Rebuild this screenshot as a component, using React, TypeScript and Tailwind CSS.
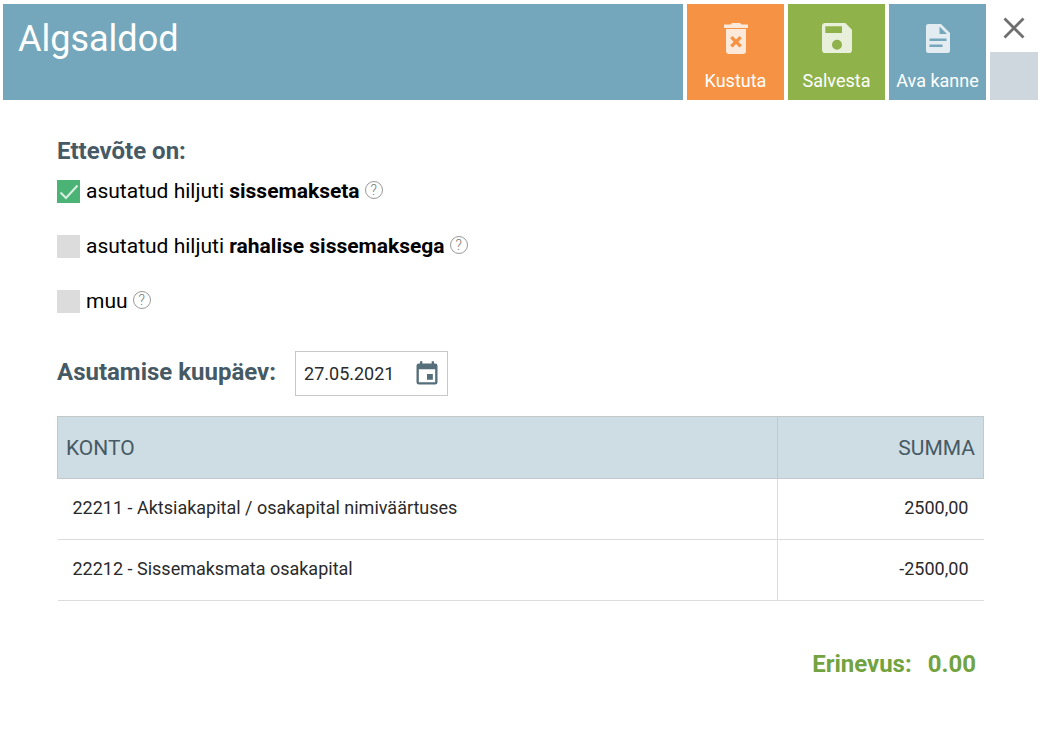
import type { ReactNode } from "react";

const accounts = [
  { name: "22211 - Aktsiakapital / osakapital nimiväärtuses", sum: "2500,00" },
  { name: "22212 - Sissemaksmata osakapital", sum: "-2500,00" },
];

function TrashIcon() {
  return (
    <svg viewBox="0 0 24 31" className="h-[31px] w-6" fill="currentColor" aria-hidden="true">
      <path
        fillRule="evenodd"
        d="M0 1.500h6.500L8 0h8l1.500 1.500H24V5H0zM2 6h20v22a3 3 0 0 1-3 3H5a3 3 0 0 1-3-3zM8.500 13L6.200 15.300l3.500 3.500-3.500 3.500L8.500 24.600l3.500-3.500 3.500 3.500 2.300-2.300-3.500-3.500 3.500-3.500L15.500 13 12 16.500z"
      />
    </svg>
  );
}

function SaveIcon() {
  return (
    <svg viewBox="3 3 18 18" className="size-[30px]" fill="currentColor" aria-hidden="true">
      <path
        fillRule="evenodd"
        d="M17 3H5a2 2 0 0 0-2 2v14a2 2 0 0 0 2 2h14a2 2 0 0 0 2-2V7zM12 19a3 3 0 1 1 0-6 3 3 0 0 1 0 6zM15 9H5V5h10z"
      />
    </svg>
  );
}

function DocumentIcon() {
  return (
    <svg viewBox="0 0 24 29" className="h-[29px] w-6" fill="currentColor" aria-hidden="true">
      <path
        fillRule="evenodd"
        d="M2.500 0H15l9 9v17.500a2.500 2.500 0 0 1-2.500 2.500h-19A2.500 2.500 0 0 1 0 26.500v-24A2.500 2.500 0 0 1 2.500 0zM13.500 2.500v7.500H21zM3.500 14.500V17h17v-2.500zM3.500 20.500V23h13v-2.500z"
      />
    </svg>
  );
}

function CalendarIcon() {
  return (
    <svg viewBox="0 0 24 24" className="size-7" fill="currentColor" aria-hidden="true">
      <path d="M17 12h-5v5h5v-5zM16 1v2H8V1H6v2H5a2 2 0 0 0-2 2v14a2 2 0 0 0 2 2h14a2 2 0 0 0 2-2V5a2 2 0 0 0-2-2h-1V1h-2zm3 18H5V8h14v11z" />
    </svg>
  );
}

function ActionButton({ label, color, icon }: { label: string; color: string; icon: ReactNode }) {
  return (
    <button
      type="button"
      className={`flex w-[97px] shrink-0 flex-col items-center justify-between pt-[18px] pb-[6px] text-lg leading-[26px] whitespace-nowrap text-white ${color}`}
    >
      <span className="flex h-8 items-center opacity-80">{icon}</span>
      {label}
    </button>
  );
}

function Option({ id, text, strong, checked }: { id: string; text: string; strong?: string; checked?: boolean }) {
  return (
    <div className="flex h-6 items-center">
      <span className="grid size-[23px] shrink-0">
        <input
          id={id}
          type="checkbox"
          defaultChecked={checked}
          className="peer col-start-1 row-start-1 size-[23px] appearance-none bg-[#dcdcdc] checked:bg-[#4cb377]"
        />
        <svg
          viewBox="0 0 23 23"
          className="pointer-events-none col-start-1 row-start-1 hidden size-[23px] peer-checked:block"
          fill="none"
          stroke="#d9efe2"
          strokeWidth="2"
          aria-hidden="true"
        >
          <path d="M3.500 12.500L9 18L20.500 5.500" />
        </svg>
      </span>
      <label htmlFor={id} className="pl-[6px] text-[21px] leading-6 text-black">
        {text}
        {strong && <b className="font-bold"> {strong}</b>}
      </label>
      <button
        type="button"
        aria-label="Abi"
        className="mb-[2px] ml-[5px] flex size-[18px] items-center justify-center rounded-full border border-[#999] text-sm leading-4 font-light text-[#777]"
      >
        ?
      </button>
    </div>
  );
}

export default function App() {
  return (
    <div className="min-h-screen bg-white font-[Roboto,sans-serif]">
      <header className="flex h-[100px] gap-1 pt-1 pr-1 pl-[3px]">
        <h1 className="flex-1 bg-[#74a7bc] px-[15px] pt-[15px] text-4xl leading-10 text-white">Algsaldod</h1>
        <ActionButton label="Kustuta" color="bg-[#f59244]" icon={<TrashIcon />} />
        <ActionButton label="Salvesta" color="bg-[#8fb34a]" icon={<SaveIcon />} />
        <ActionButton label="Ava kanne" color="bg-[#74a7bc]" icon={<DocumentIcon />} />
        <div className="flex w-12 shrink-0 flex-col">
          <button type="button" aria-label="Sulge" className="flex h-12 items-center justify-center">
            <svg viewBox="0 0 22 22" className="size-[22px]" stroke="#6f6f6f" strokeWidth="2.800" aria-hidden="true">
              <path d="M1.500 1.500l19 19M20.500 1.500l-19 19" />
            </svg>
          </button>
          <div className="flex-1 bg-[#ced6de]" />
        </div>
      </header>

      <main className="pt-9 pr-[58px] pl-[57px]">
        <h2 className="text-2xl leading-[30px] font-bold text-[#465a65]">Ettevõte on:</h2>
        <div className="mt-[13px] flex flex-col gap-[31px]">
          <Option id="no-deposit" text="asutatud hiljuti" strong="sissemakseta" checked />
          <Option id="cash-deposit" text="asutatud hiljuti" strong="rahalise sissemaksega" />
          <Option id="other" text="muu" />
        </div>

        <div className="mt-[38px] flex items-center gap-[19px]">
          <label htmlFor="founded" className="pb-1 text-2xl leading-[30px] font-bold text-[#465a65]">
            Asutamise kuupäev:
          </label>
          <div className="flex h-[45px] w-[153px] items-center justify-between border border-[#c8c8c8] pr-[6px] pl-2">
            <input
              id="founded"
              type="text"
              defaultValue="27.05.2021"
              className="w-24 text-lg text-[#2a2a2a] outline-none"
            />
            <button type="button" aria-label="Vali kuupäev" className="shrink-0 text-[#546e7a]">
              <CalendarIcon />
            </button>
          </div>
        </div>

        <table className="mt-5 w-full border-collapse">
          <thead>
            <tr className="h-[62px] bg-[#cddde3] text-[21px] leading-6 text-[#465a65]">
              <th className="border border-[#c3c8cb] px-2 text-left font-normal">KONTO</th>
              <th className="w-[206px] border border-[#c3c8cb] px-2 text-right font-normal">SUMMA</th>
            </tr>
          </thead>
          <tbody>
            {accounts.map((account) => (
              <tr key={account.name} className="h-[61px] border-b border-[#dcdcdc] text-lg text-[#2a2a2a]">
                <td className="border-r border-[#dcdcdc] px-[15px] pb-[3px]">{account.name}</td>
                <td className="px-[15px] pb-[3px] text-right">{account.sum}</td>
              </tr>
            ))}
          </tbody>
        </table>

        <p className="mt-12 flex justify-end gap-4 pr-2 text-2xl leading-[30px] font-bold text-[#72a340]">
          <span>Erinevus:</span>
          <span>0.00</span>
        </p>
      </main>
    </div>
  );
}
